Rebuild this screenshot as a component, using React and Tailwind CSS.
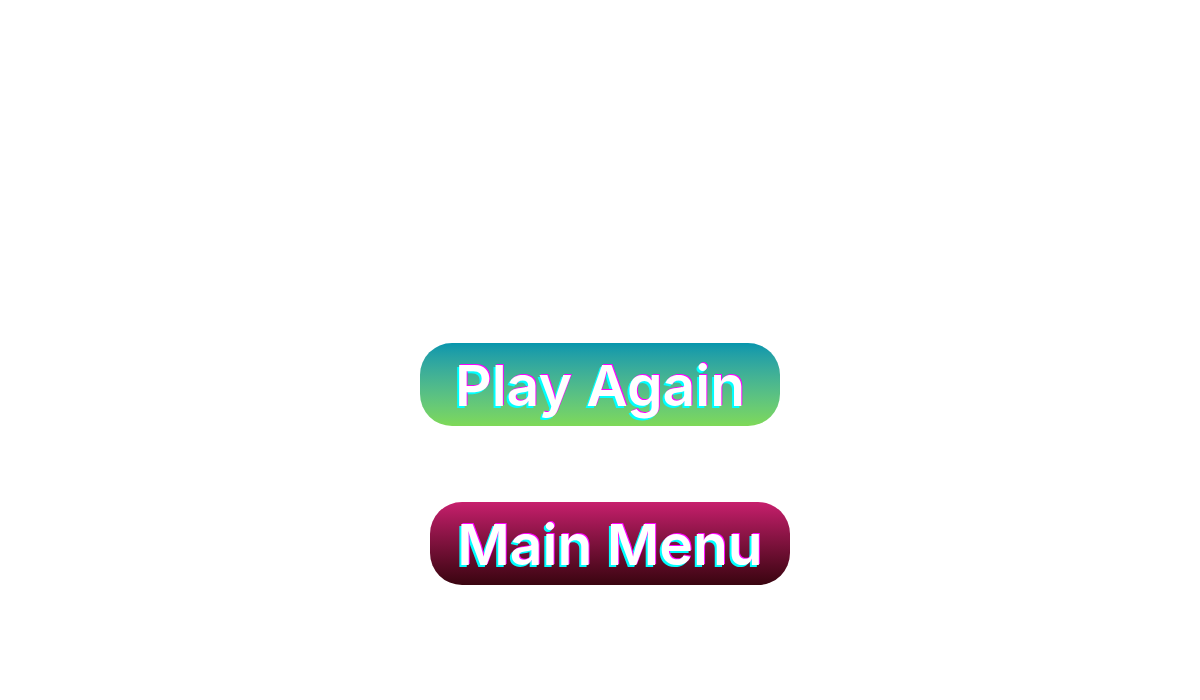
export default function App() {
  return (
    <div className="w-[1200px] h-[700px] bg-white flex flex-col items-center pt-[343px] font-['Inter',sans-serif]">
      <button className="w-[360px] h-[83px] rounded-[32px] bg-gradient-to-b from-[#0596ad] to-[#7ed957] flex items-center justify-center text-white font-semibold text-[57px] leading-none pt-[2px] [text-shadow:1px_-1px_0_#ff00ff,-2px_2px_0_#00ffff]">
        Play Again
      </button>
      <button className="mt-[76px] ml-[20px] w-[360px] h-[83px] rounded-[32px] bg-gradient-to-b from-[#c71f6d] to-[#3a0510] flex items-center justify-center text-white font-semibold text-[57px] leading-none pt-[2px] [text-shadow:1px_-1px_0_#ff00ff,-2px_2px_0_#00ffff]">
        Main Menu
      </button>
    </div>
  );
}
